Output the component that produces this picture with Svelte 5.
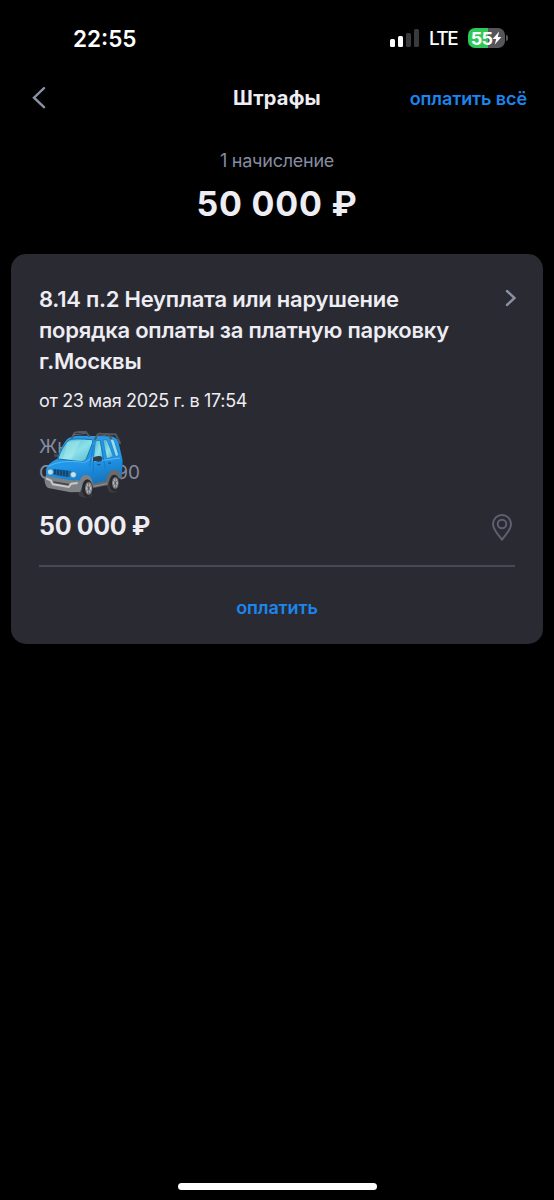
<script>
	const bars = [
		{ height: 8, on: true },
		{ height: 11, on: true },
		{ height: 14, on: false },
		{ height: 18, on: false }
	];

	const fine = {
		title: ['8.14 п.2 Неуплата или нарушение', 'порядка оплаты за платную парковку', 'г.Москвы'],
		date: 'от 23 мая 2025 г. в 17:54',
		amount: '50 000 ₽'
	};
</script>

<div class="screen">
	<div class="status">
		<span class="time">22:55</span>
		<div class="signal">
			{#each bars as bar}
				<i class:on={bar.on} style="height: {bar.height}px"></i>
			{/each}
		</div>
		<span class="lte">LTE</span>
		<div class="battery">
			<span>55</span>
			<svg width="10" height="14" viewBox="0 0 10 14"><path d="M7.2 0.5 0.6 8h3.6L2.8 13.5 9.4 6H5.8z" fill="#fff" /></svg>
		</div>
		<i class="nub"></i>
	</div>

	<header>
		<button class="back" aria-label="Назад">
			<svg width="14" height="22" viewBox="0 0 14 22"><path d="M12 1.200 2 10.700l10 9.500" /></svg>
		</button>
		<h1>Штрафы</h1>
		<button class="pay-all">оплатить всё</button>
	</header>

	<div class="total">
		<p>1 начисление</p>
		<strong>{fine.amount}</strong>
	</div>

	<section class="card">
		<div class="top">
			<h2>
				{#each fine.title as line}
					<span>{line}</span>
				{/each}
			</h2>
			<svg class="chevron" width="12" height="18" viewBox="0 0 12 18"><path d="M3 2l7.500 7L3 16" /></svg>
		</div>
		<p class="date">{fine.date}</p>
		<div class="vehicle">
			<span class="name">Жн</span>
			<span class="plate"><span>О</span><span>90</span></span>
			<svg class="car" width="79" height="68" viewBox="42 18 237 204">
				<defs>
					<linearGradient id="body" x1="0" y1="0" x2="0.3" y2="1">
						<stop offset="0" stop-color="#2b9be6" />
						<stop offset="0.6" stop-color="#2196ea" />
						<stop offset="1" stop-color="#1473bb" />
					</linearGradient>
					<linearGradient id="glass" x1="0" y1="0" x2="1" y2="1">
						<stop offset="0" stop-color="#4eb5cd" />
						<stop offset="0.55" stop-color="#8ce0ea" />
						<stop offset="1" stop-color="#53b6cb" />
					</linearGradient>
					<radialGradient id="rim">
						<stop offset="0" stop-color="#77777b" />
						<stop offset="0.5" stop-color="#c4c4c8" />
						<stop offset="1" stop-color="#67676b" />
					</radialGradient>
				</defs>
				<path d="M140 190h46v24q-20 8-38 0zM225 172h34v28q-14 6-22 0z" fill="#3c3c40" />
				<path d="M48 134 Q52 115 82 101 Q92 66 111 43 Q120 34 145 32 L240 34 Q259 36 265 50 L275 94 Q279 104 277 128 L275 157 L182 188 L145 196 L48 181 Z" fill="url(#body)" />
				<path d="M84 102 Q95 65 117 45 Q130 39 187 44 Q190 46 187 55 L169 102 Q165 110 154 110 Z" fill="url(#glass)" stroke="#1773ad" stroke-width="3" />
				<path d="M112 51 99 101 124 103 151 47Z" fill="#b4f2f1" opacity="0.4" />
				<path d="M196 49 Q200 45 211 47 L219 99 190 107Z" fill="url(#glass)" stroke="#1776b6" stroke-width="2" />
				<path d="M219 46 Q223 42 231 45 L249 91 Q247 99 230 101Z" fill="url(#glass)" stroke="#1776b6" stroke-width="2" />
				<path d="M240 43 Q247 40 253 47 L266 91 257 95Z" fill="#9adce7" stroke="#1776b6" stroke-width="2" />
				<path d="M55 124 Q91 103 163 112 Q180 107 185 95 L190 110 270 99" fill="none" stroke="#55b8f2" stroke-width="3" />
				<path d="M190 60 179 124M211 47 226 132M190 110 190 145" fill="none" stroke="#1571b3" stroke-width="2" />
				<path d="M126 38 133 25 Q136 21 143 21 L167 20 177 33M195 43 202 30 Q205 25 213 26 L233 27 243 40M235 28 257 28 270 54" fill="none" stroke="#535961" stroke-width="6" stroke-linecap="round" stroke-linejoin="round" />
				<path d="M130 30 167 25M201 34 229 31" stroke="#7b848e" stroke-width="2" />
				<path d="M189 98 Q200 91 213 94 Q219 97 215 108 Q207 112 195 108 L189 110Z" fill="#303c47" />
				<rect x="72" y="86" width="13" height="10" rx="3" fill="#3d4c5a" />
				<path d="M70 132 Q96 134 124 138 L119 156 Q94 155 70 149Z" fill="#17649d" />
				<path d="M75 133v15M84 134v16M93 135v17M102 136v18M111 137v18" stroke="#173a5a" stroke-width="4" />
				<ellipse cx="61" cy="141" rx="9" ry="9" fill="#b7dcea" stroke="#3179a4" stroke-width="2" />
				<ellipse cx="130" cy="149" rx="9" ry="9" fill="#c4e3ee" stroke="#3179a4" stroke-width="2" />
				<path d="M43 155 Q48 151 60 155 L133 167 Q145 163 149 168 Q156 146 174 151 Q185 154 188 174 L188 183 Q175 166 165 173 Q155 179 151 201 L121 202 55 189 Q43 183 43 155Z" fill="#7e8184" />
				<path d="M48 160 62 166 69 178 116 186 124 176 143 174" fill="none" stroke="#c7c8c9" stroke-width="6" />
				<path d="M70 171 116 179" fill="none" stroke="#45464a" stroke-width="5" />
				<path d="M187 176 228 168 Q231 143 244 137 Q265 130 275 153 L275 166 Q260 146 249 153 Q238 158 234 180 L190 189Z" fill="#686a6d" />
				<path d="M190 184 231 176" stroke="#909397" stroke-width="3" />
				<ellipse cx="172" cy="190" rx="16" ry="27" fill="#29292d" />
				<ellipse cx="176" cy="190" rx="11" ry="20" fill="url(#rim)" />
				<path d="M176 172v36M167 179l18 22M185 179l-18 22" stroke="#555559" stroke-width="2" />
				<ellipse cx="253" cy="174" rx="15" ry="25" fill="#29292d" />
				<ellipse cx="256" cy="174" rx="10" ry="18" fill="url(#rim)" />
				<path d="M256 158v32M248 164l16 20M264 164l-16 20" stroke="#555559" stroke-width="2" />
				<path d="M202 119h9M235 114h8" stroke="#155b8d" stroke-width="4" />
			</svg>
		</div>
		<div class="sum">
			<strong>{fine.amount}</strong>
			<svg width="20" height="27" viewBox="0 0 20 27">
				<path d="M10 1C5 1 1 5 1 10c0 5.600 5.700 11.500 9 15.500 3.300-4 9-9.900 9-15.500 0-5-4-9-9-9z" />
				<circle cx="10" cy="10" r="4.300" />
			</svg>
		</div>
		<button class="pay">оплатить</button>
	</section>

	<div class="home"></div>
</div>

<style>
	:global(body) {
		background: #000;
	}

	.screen {
		display: flex;
		flex-direction: column;
		width: 554px;
		height: 1200px;
		background: #000;
		color: #ededf3;
		font-family: Inter, 'Liberation Sans', sans-serif;
	}

	h1,
	h2,
	p {
		margin: 0;
	}

	button {
		padding: 0;
		border: 0;
		background: none;
		color: #1b86ee;
		font: 600 18px/24px Inter, sans-serif;
		letter-spacing: -0.1px;
	}

	svg {
		display: block;
		flex-shrink: 0;
	}

	.status {
		display: flex;
		align-items: center;
		height: 76px;
		padding: 0 46px 0 73px;
		color: #fff;
	}
	.time {
		flex: 1;
		font-size: 22.5px;
		font-weight: 600;
	}
	.signal {
		display: flex;
		align-items: flex-end;
		gap: 3px;
		height: 18px;
		margin-right: 10px;
	}
	.signal i {
		width: 5px;
		border-radius: 1.5px;
		background: #3a3a3c;
	}
	.signal i.on {
		background: #fff;
	}
	.lte {
		width: 39px;
		font-size: 19px;
		font-weight: 500;
		letter-spacing: -1.6px;
	}
	.battery {
		display: flex;
		align-items: center;
		justify-content: center;
		width: 37px;
		height: 20px;
		border-radius: 7px;
		background: linear-gradient(90deg, #30c759 55%, #55555a 55%);
		font-size: 18px;
		font-weight: 700;
		letter-spacing: -0.7px;
	}
	.nub {
		width: 2px;
		height: 6px;
		margin-left: 1px;
		border-radius: 0 2px 2px 0;
		background: #55555a;
	}

	header {
		display: grid;
		grid-template-columns: 1fr auto 1fr;
		align-items: center;
		height: 44px;
		padding: 0 27px;
	}
	.back {
		justify-self: start;
		margin-left: 5px;
	}
	.back path,
	.chevron path,
	.sum path,
	.sum circle {
		fill: none;
		stroke: #8a91a5;
		stroke-width: 2.4;
		stroke-linecap: round;
	}
	h1 {
		font-size: 20px;
		font-weight: 700;
		letter-spacing: 0.2px;
	}
	.pay-all {
		justify-self: end;
		margin-top: 2px;
	}

	.total {
		display: flex;
		flex-direction: column;
		align-items: center;
		height: 134px;
		padding-top: 29px;
		box-sizing: border-box;
	}
	.total p {
		color: #858ba0;
		font-size: 18px;
		line-height: 24px;
		letter-spacing: -0.25px;
	}
	.total strong {
		margin-top: 8px;
		font-size: 34px;
		line-height: 45px;
		letter-spacing: 0.75px;
	}

	.card {
		height: 390px;
		margin: 0 11px;
		padding: 30px 28px 0;
		border-radius: 15px;
		background: #2a2a32;
		box-sizing: border-box;
	}
	.top {
		display: flex;
		justify-content: space-between;
		height: 93px;
	}
	h2 {
		font-size: 22px;
		font-weight: 600;
		line-height: 31px;
		letter-spacing: -0.24px;
		white-space: nowrap;
	}
	h2 span {
		display: block;
	}
	.chevron {
		margin: 5px -1px 0 0;
	}
	.date {
		margin-top: 12px;
		font-size: 18px;
		line-height: 24px;
		letter-spacing: -0.34px;
	}
	.vehicle {
		position: relative;
		display: flex;
		flex-direction: column;
		height: 52px;
		margin-top: 21px;
		color: #858ba0;
		font-size: 19px;
		line-height: 26px;
	}
	.plate {
		display: flex;
		justify-content: space-between;
		width: 101px;
	}
	/* sits over the owner and plate lines */
	.car {
		position: absolute;
		left: 5px;
		top: -3px;
	}
	.sum {
		display: flex;
		align-items: center;
		justify-content: space-between;
		height: 81px;
		padding-right: 3px;
		border-bottom: 2px solid #464958;
		box-sizing: border-box;
	}
	.sum strong {
		font-size: 25px;
		letter-spacing: -0.35px;
	}
	.sum svg {
		margin-top: 3px;
	}
	.sum svg path,
	.sum svg circle {
		stroke: #5c6070;
		stroke-width: 2;
	}
	.pay {
		display: block;
		width: 100%;
		margin-top: 29px;
	}

	.home {
		width: 199px;
		height: 7px;
		margin: auto auto 10px;
		border-radius: 4px;
		background: #fff;
	}
</style>
